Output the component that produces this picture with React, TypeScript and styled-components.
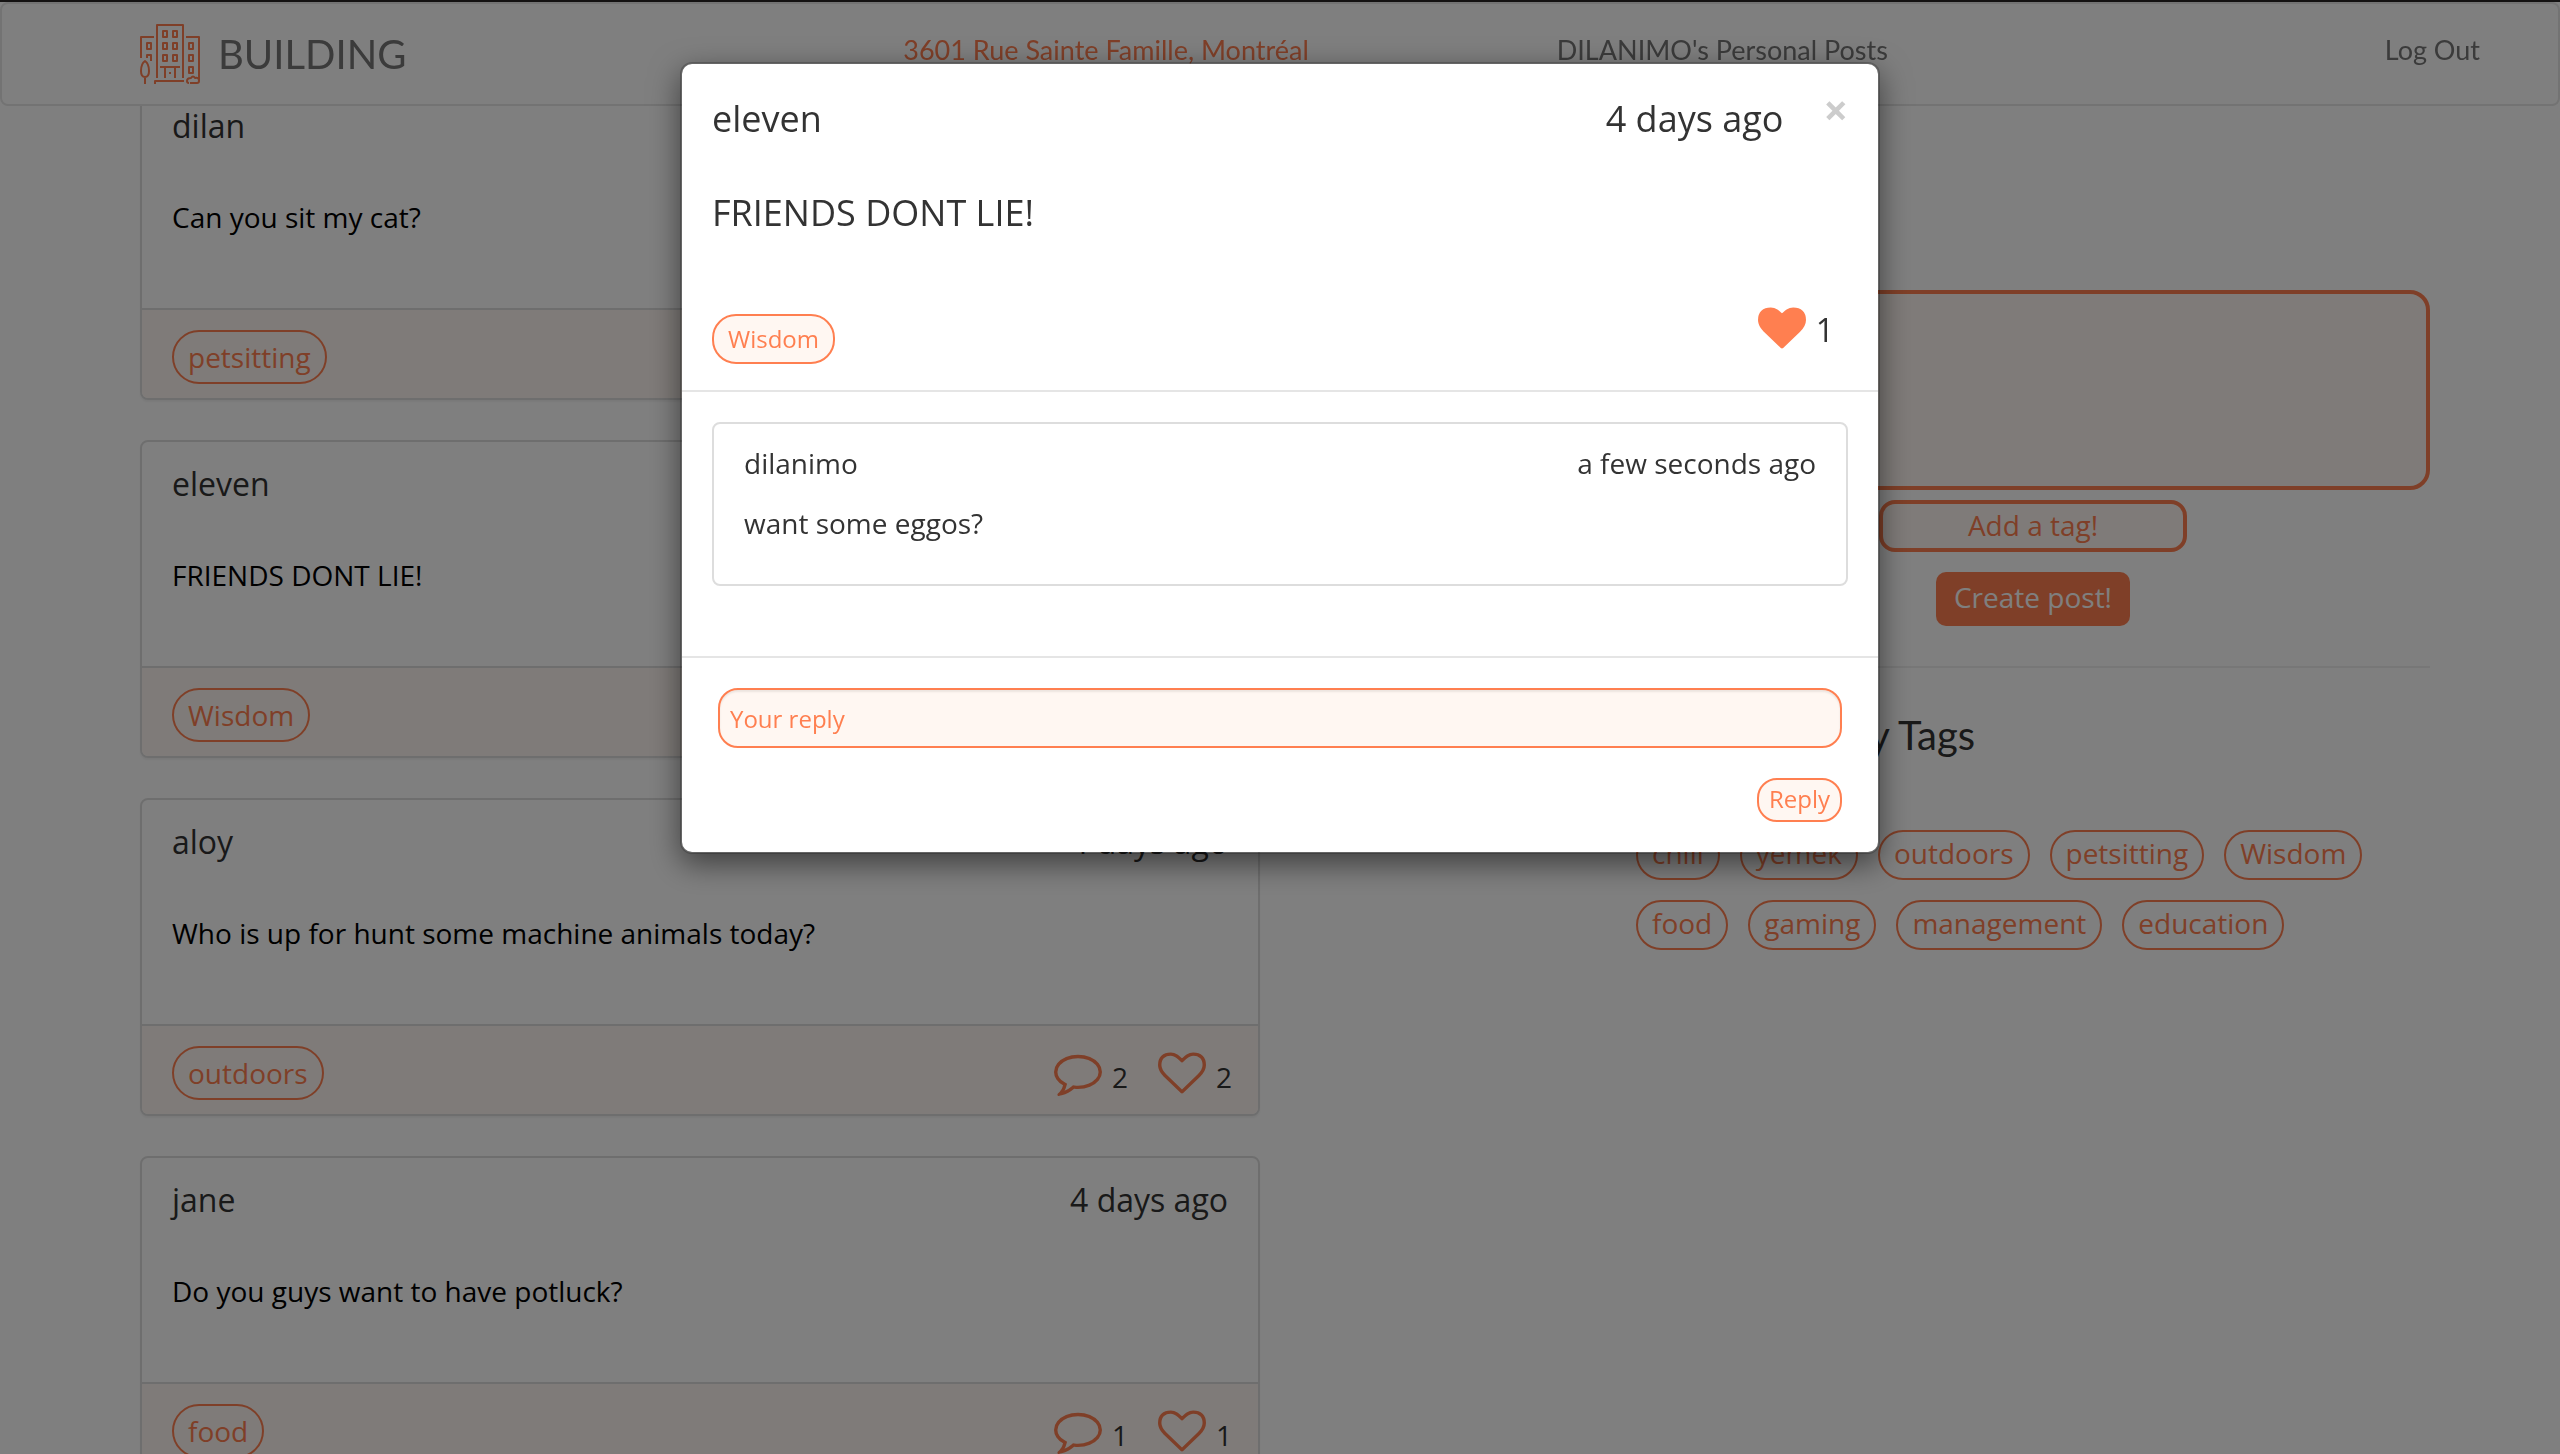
import React from "react";
import styled, { createGlobalStyle } from "styled-components";

const CORAL = "#ff7f50";
const SHELL = "#fff7f2";
const BODY = '"Open Sans", "Noto Sans", sans-serif';
const DISPLAY = '"Lato", sans-serif';

const GlobalStyle = createGlobalStyle`
  *, *::before, *::after { box-sizing: border-box; }
  body {
    margin: 0;
    overflow: hidden;
    background: #fff;
    color: #333;
    font-family: ${BODY};
    font-size: 28px;
    line-height: 38px;
  }
  h1, h2, h3, p, ul { margin: 0; padding: 0; font-weight: 400; }
  button, input, textarea { font-family: inherit; }
`;

/* ---------- page ---------- */

const Shell = styled.div`
  height: 100vh;
  overflow: hidden;
  border-top: 2px solid #141212;
`;

const Navbar = styled.header`
  position: fixed;
  z-index: 1;
  top: 2px;
  left: 0;
  right: 0;
  height: 104px;
  display: flex;
  align-items: center;
  justify-content: space-between;
  padding: 0 78px 0 138px;
  background: rgba(255, 255, 255, 0.98);
  border: 2px solid #e7e7e7;
  border-radius: 8px;
  font-family: ${DISPLAY};
`;

const Brand = styled.a`
  display: flex;
  align-items: center;
  gap: 18px;
  color: #777;
  font-size: 40px;
  line-height: 60px;
  text-decoration: none;
`;

const NavLinks = styled.nav`
  display: flex;
  gap: 248px;
`;

const NavLink = styled.a<{ $active?: boolean }>`
  padding-bottom: 8px;
  color: ${(p) => (p.$active ? CORAL : "#777")};
  font-size: 27px;
  line-height: 40px;
  text-decoration: none;
`;

const Columns = styled.main`
  display: grid;
  grid-template-columns: 1120fr 794fr;
  gap: 376px;
  align-items: start;
  padding: 80px 130px 0 140px;
`;

const Feed = styled.section`
  display: flex;
  flex-direction: column;
  gap: 40px;
`;

/* ---------- posts ---------- */

const Post = styled.article`
  border: 2px solid #ddd;
  border-radius: 8px;
  background: #fff;
  box-shadow: 0 2px 2px rgba(0, 0, 0, 0.05);
  overflow: hidden;
`;

const PostBody = styled.div`
  padding: 20px 30px 72px;
  color: #000;
`;

const Heading = styled.div<{ $size: number; $line: number; $gap: number }>`
  display: flex;
  justify-content: space-between;
  margin-bottom: ${(p) => p.$gap}px;
  color: #333;
  font-size: ${(p) => p.$size}px;
  line-height: ${(p) => p.$line}px;
`;

const Author = styled.h3`
  flex: 1;
  font-size: inherit;
  font-weight: 500;
`;

const PostFooter = styled.footer`
  display: flex;
  align-items: center;
  justify-content: space-between;
  padding: 20px 26px 14px 30px;
  border-top: 2px solid #ddd;
  background: ${SHELL};
`;

const Tag = styled.button<{ $small?: boolean; $filled?: boolean; $height: number }>`
  height: ${(p) => p.$height}px;
  padding: 0 14px;
  border: 2px solid ${CORAL};
  border-radius: 1em;
  background: ${(p) => (p.$filled ? SHELL : "transparent")};
  color: ${CORAL};
  font-size: ${(p) => (p.$small ? 24 : 28)}px;
  line-height: 38px;
`;

const Counters = styled.div`
  display: flex;
  gap: 30px;
`;

const Counter = styled.button<{ $large?: boolean }>`
  display: flex;
  align-items: flex-end;
  gap: 10px;
  padding: 0;
  border: 0;
  background: none;
  color: #333;
  font-size: ${(p) => (p.$large ? 32 : 28)}px;
  line-height: ${(p) => (p.$large ? 44 : 40)}px;
`;

const Glyph = styled.svg`
  display: block;
  width: 48px;
  height: 48px;
  fill: ${CORAL};
`;

/* ---------- sidebar ---------- */

const Sidebar = styled.aside`
  padding-top: 208px;
`;

const PostForm = styled.form`
  display: flex;
  flex-direction: column;
  align-items: center;
  padding-bottom: 40px;
  border-bottom: 2px solid #eee;
`;

const PostText = styled.textarea`
  width: 100%;
  height: 200px;
  margin-bottom: 10px;
  padding: 12px 20px;
  border: 4px solid ${CORAL};
  border-radius: 20px;
  background: ${SHELL};
  font-size: 28px;
  resize: none;
`;

const TagInput = styled.input`
  width: 308px;
  height: 52px;
  margin-bottom: 20px;
  padding: 0 0 2px;
  border: 4px solid ${CORAL};
  border-radius: 16px;
  background: ${SHELL};
  font-size: 28px;
  text-align: center;
  &::placeholder { color: ${CORAL}; opacity: 1; }
`;

const CreateButton = styled.button`
  height: 54px;
  padding: 0 18px 4px;
  border: 0;
  border-radius: 10px;
  background: ${CORAL};
  color: #fff;
  font-size: 28px;
  line-height: 38px;
`;

const TagsTitle = styled.h2`
  margin: 40px 0 68px;
  padding-left: 50px;
  font-family: ${DISPLAY};
  font-size: 40px;
  line-height: 54px;
`;

const TagCloud = styled.div`
  display: flex;
  flex-wrap: wrap;
  gap: 20px;
  ${Tag} { padding-bottom: 4px; }
`;

/* ---------- modal ---------- */

const Backdrop = styled.div`
  position: fixed;
  z-index: 2;
  inset: 2px 0 0;
  display: flex;
  justify-content: center;
  align-items: flex-start;
  padding-top: 60px;
  background: rgba(0, 0, 0, 0.5);
`;

const Dialog = styled.section`
  width: 1200px;
  border: 2px solid rgba(0, 0, 0, 0.2);
  border-radius: 12px;
  background: #fff;
  background-clip: padding-box;
  box-shadow: 0 10px 30px rgba(0, 0, 0, 0.5);
`;

const DialogHeader = styled.header`
  padding: 30px 30px 26px;
  border-bottom: 2px solid #e5e5e5;
`;

const DialogText = styled.p`
  margin-bottom: 66px;
  font-size: 36px;
  line-height: 50px;
`;

const CloseButton = styled.button`
  align-self: flex-start;
  margin-left: 40px;
  padding: 0;
  border: 0;
  background: none;
  color: #ccc;
  font-size: 43px;
  font-weight: 700;
  line-height: 32px;
`;

const DialogMeta = styled.div`
  display: flex;
  align-items: flex-start;
  justify-content: space-between;
  min-height: 60px;
  padding-right: 14px;
  ${Tag} { align-self: flex-end; }
`;

const DialogBody = styled.div`
  padding: 30px 30px 70px;
`;

const Comment = styled.article`
  padding: 20px 30px 42px;
  border: 2px solid #ddd;
  border-radius: 8px;
`;

const ReplyForm = styled.form`
  display: flex;
  flex-direction: column;
  align-items: flex-end;
  gap: 30px;
  padding: 30px 36px;
  border-top: 2px solid #e5e5e5;
`;

const ReplyInput = styled.input`
  width: 100%;
  height: 60px;
  padding: 0 10px;
  border: 2px solid ${CORAL};
  border-radius: 20px;
  background: ${SHELL};
  box-shadow: inset 0 2px 2px rgba(0, 0, 0, 0.075);
  font-size: 24px;
  &::placeholder { color: ${CORAL}; opacity: 1; }
`;

const ReplyButton = styled.button`
  height: 44px;
  padding: 0 10px 2px;
  border: 2px solid ${CORAL};
  border-radius: 20px;
  background: ${SHELL};
  color: ${CORAL};
  font-size: 24px;
  line-height: 38px;
`;

/* ---------- drawings ---------- */

const HeartOutline = () => (
  <Glyph viewBox="0 0 1792 1792" aria-hidden="true">
    <path d="M1664 596q0-81-21.5-143t-55-98.5-81.5-59.5-94-31-98-8-112 25.5-110.5 64-86.5 72-60 61.5q-18 22-49 22t-49-22q-24-28-60-61.5t-86.5-72-110.5-64-112-25.5-98 8-94 31-81.5 59.5-55 98.5-21.5 143q0 168 187 355l581 560 580-559q188-188 188-356zm128 0q0 221-229 450l-623 600q-18 18-44 18t-44-18l-624-602q-10-8-27.5-26t-55.5-65.5-68-97.5-53.5-121-23.5-138q0-220 127-344t351-124q62 0 126.5 21.5t120 58 95.5 68.5 76 68q36-36 76-68t95.5-68.5 120-58 126.5-21.5q224 0 351 124t127 344z" />
  </Glyph>
);

const HeartSolid = () => (
  <Glyph viewBox="0 0 1792 1792" aria-hidden="true">
    <path d="M896 1664q-26 0-44-18l-624-602q-10-8-27.5-26t-55.5-65.5-68-97.5-53.5-121-23.5-138q0-220 127-344t351-124q62 0 126.5 21.5t120 58 95.5 68.5 76 68q36-36 76-68t95.5-68.5 120-58 126.5-21.5q224 0 351 124t127 344q0 221-229 450l-623 600q-18 18-44 18z" />
  </Glyph>
);

const CommentOutline = () => (
  <Glyph viewBox="0 40 1792 1792" aria-hidden="true">
    <path d="M896 384q-204 0-381.5 69.5t-282 187.5-104.5 255q0 112 71.5 213.5t201.5 175.5l87 50-27 96q-24 91-70 172 152-63 275-171l43-38 57 6q69 8 130 8 204 0 381.5-69.5t282-187.5 104.5-255-104.5-255-282-187.5-381.5-69.5zm896 512q0 174-120 321.5t-326 233-450 85.5q-70 0-145-8-198 175-460 242-49 14-114 22h-5q-15 0-27-10.5t-16-27.5v-1q-3-4-.5-12t2-10 4.5-9.5l6-9 7-8.5 8-9q7-8 31-34.5t34.5-38 31-39.5 32.5-51 27-59 26-76q-157-89-247.5-220t-90.5-281q0-174 120-321.5t326-233 450-85.5 450 85.5 326 233 120 321.5z" />
  </Glyph>
);

const LogoSvg = styled.svg`
  display: block;
  width: 60px;
  height: 60px;
  fill: none;
  stroke: ${CORAL};
  stroke-width: 2;
  stroke-linejoin: round;
`;

const LOGO_WINDOWS = [
  [23, 7], [33, 7],
  [23, 19], [33, 19],
  [23, 31], [33, 31],
  [7, 19],
  [49, 19], [49, 31], [49, 43],
];

const Logo = () => (
  <LogoSvg viewBox="0 0 60 60" aria-hidden="true">
    <path d="M17 54V1h26v53M14 13H1v21M46 13h13v44q0 2-2 2h-7" />
    <path d="M15 60v-3h29" />
    <path d="M7 34v-3h4v6" />
    <path d="M20 43h20M25 43v11M35 43v11M30 48v2" />
    <path d="M5 37c3 2 4 6 4 10q0 6-4 6t-4-6c0-4 1-8 4-10zM5 53v7" />
    <path d="M49 59q-2 0-2-2 0-3 4-3 2-3 4 0 4-1 4 3" />
    {LOGO_WINDOWS.map(([x, y]) => (
      <rect key={`${x}-${y}`} x={x} y={y} width="4" height="6" />
    ))}
  </LogoSvg>
);

/* ---------- data ---------- */

const posts = [
  { author: "dilan", time: "4 days ago", text: "Can you sit my cat?", tag: "petsitting", comments: 1, likes: 1 },
  { author: "eleven", time: "4 days ago", text: "FRIENDS DONT LIE!", tag: "Wisdom", comments: 1, likes: 1 },
  { author: "aloy", time: "4 days ago", text: "Who is up for hunt some machine animals today?", tag: "outdoors", comments: 2, likes: 2 },
  { author: "jane", time: "4 days ago", text: "Do you guys want to have potluck?", tag: "food", comments: 1, likes: 1 },
];

const tags = ["chill", "yemek", "outdoors", "petsitting", "Wisdom", "food", "gaming", "management", "education"];

export default function App() {
  return (
    <Shell>
      <GlobalStyle />
      <Navbar>
        <Brand href="#">
          <Logo />
          BUILDING
        </Brand>
        <NavLinks>
          <NavLink href="#" $active>3601 Rue Sainte Famille, Montréal</NavLink>
          <NavLink href="#">DILANIMO's Personal Posts</NavLink>
        </NavLinks>
        <NavLink href="#">Log Out</NavLink>
      </Navbar>

      <Columns>
        <Feed>
          {posts.map((post) => (
            <Post key={post.author}>
              <PostBody>
                <Heading $size={32} $line={44} $gap={50}>
                  <Author>{post.author}</Author>
                  <span>{post.time}</span>
                </Heading>
                <p>{post.text}</p>
              </PostBody>
              <PostFooter>
                <Tag type="button" $height={54}>{post.tag}</Tag>
                <Counters>
                  <Counter type="button" aria-label={`${post.comments} comments`}>
                    <CommentOutline />
                    {post.comments}
                  </Counter>
                  <Counter type="button" aria-label={`${post.likes} likes`}>
                    <HeartOutline />
                    {post.likes}
                  </Counter>
                </Counters>
              </PostFooter>
            </Post>
          ))}
        </Feed>

        <Sidebar>
          <PostForm>
            <PostText aria-label="New post" />
            <TagInput type="text" placeholder="Add a tag!" aria-label="Add a tag" />
            <CreateButton type="button">Create post!</CreateButton>
          </PostForm>
          <TagsTitle>Community Tags</TagsTitle>
          <TagCloud>
            {tags.map((tag) => (
              <Tag key={tag} type="button" $height={50}>{tag}</Tag>
            ))}
          </TagCloud>
        </Sidebar>
      </Columns>

      <Backdrop>
        <Dialog role="dialog" aria-modal="true" aria-labelledby="dialog-author">
          <DialogHeader>
            <Heading $size={36} $line={50} $gap={44}>
              <Author id="dialog-author">eleven</Author>
              <span>4 days ago</span>
              <CloseButton type="button" aria-label="Close">×</CloseButton>
            </Heading>
            <DialogText>FRIENDS DONT LIE!</DialogText>
            <DialogMeta>
              <Tag type="button" $small $filled $height={50}>Wisdom</Tag>
              <Counter type="button" $large aria-label="1 like">
                <HeartSolid />
                1
              </Counter>
            </DialogMeta>
          </DialogHeader>
          <DialogBody>
            <Comment>
              <Heading $size={28} $line={38} $gap={22}>
                <Author>dilanimo</Author>
                <span>a few seconds ago</span>
              </Heading>
              <p>want some eggos?</p>
            </Comment>
          </DialogBody>
          <ReplyForm>
            <ReplyInput type="text" placeholder="Your reply" aria-label="Your reply" />
            <ReplyButton type="button">Reply</ReplyButton>
          </ReplyForm>
        </Dialog>
      </Backdrop>
    </Shell>
  );
}
